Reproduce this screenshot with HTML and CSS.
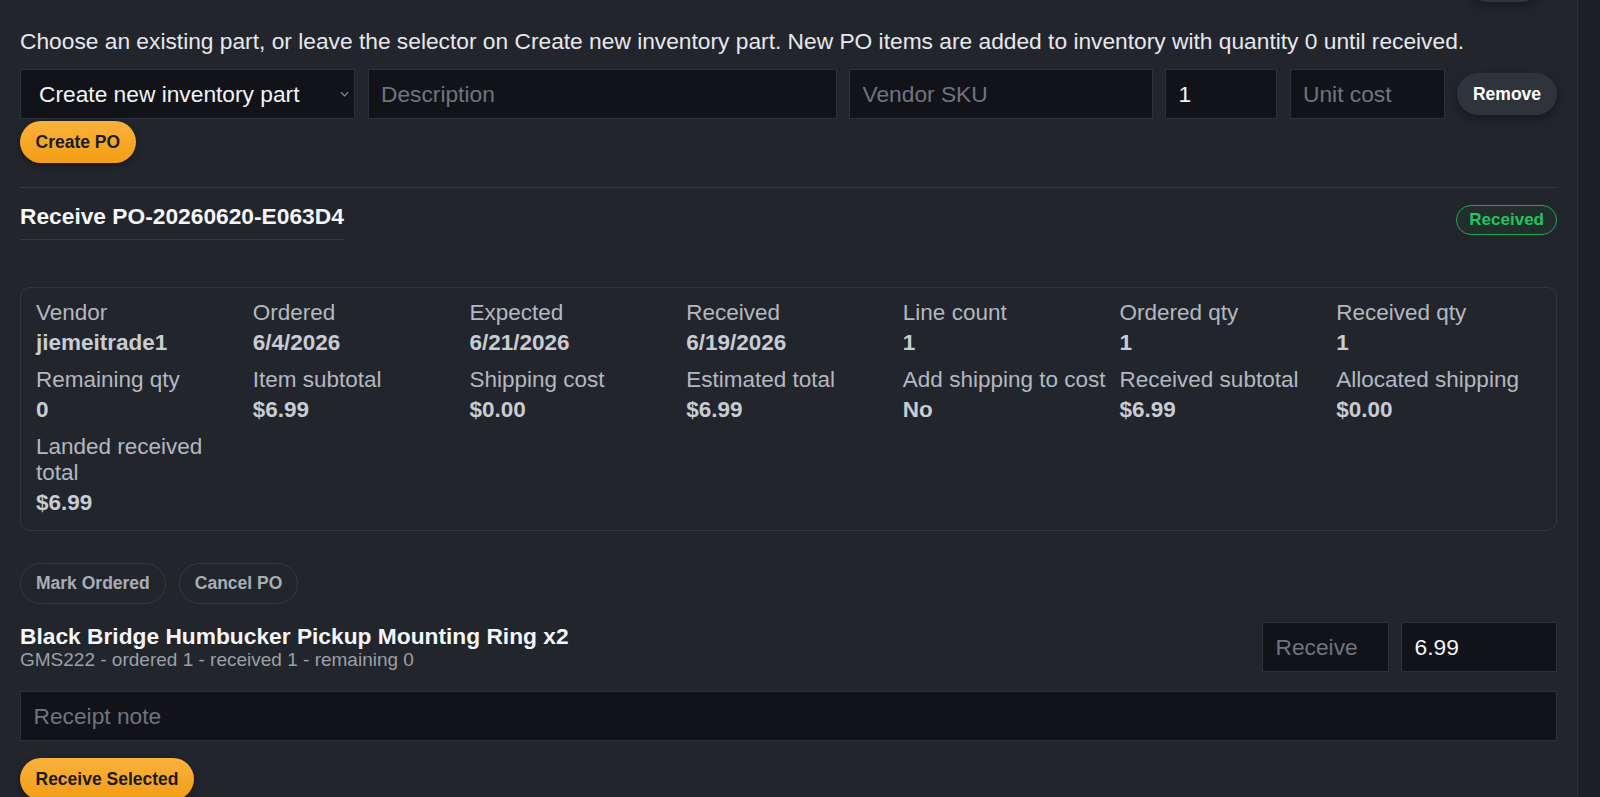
FILE: index.html
```html
<!DOCTYPE html>
<html lang="en">
<head>
  <meta charset="UTF-8">
  <meta name="viewport" content="width=device-width, initial-scale=1.0">
  <title>Purchase Orders</title>
  <link rel="stylesheet" href="styles.css">
</head>
<body>

  <div class="po-panel">
    <div class="panel-top">
      <button class="btn-dark stub" aria-label="Close"></button>
    </div>

    <p class="hint">Choose an existing part, or leave the selector on Create new inventory part. New PO items are added to inventory with quantity 0 until received.</p>

    <!-- New PO line -->
    <div class="line-row">
      <div class="select-wrap">
        <select class="field">
          <option>Create new inventory part</option>
        </select>
        <svg class="chevron" viewBox="0 0 10 6" fill="none" stroke="#8a8f98" stroke-width="1.3">
          <path d="M1 1l4 4 4-4"/>
        </svg>
      </div>
      <input class="field" type="text" placeholder="Description">
      <input class="field" type="text" placeholder="Vendor SKU">
      <input class="field" type="text" value="1">
      <input class="field" type="text" placeholder="Unit cost">
      <button class="btn-dark">Remove</button>
    </div>
    <button class="btn-orange">Create PO</button>

    <hr class="divider">

    <!-- Receive section -->
    <div class="po-head">
      <h3 class="po-title">Receive PO-20260620-E063D4</h3>
      <span class="badge">Received</span>
    </div>

    <div class="po-stats">
      <div><div class="stat-label">Vendor</div><div class="stat-value">jiemeitrade1</div></div>
      <div><div class="stat-label">Ordered</div><div class="stat-value">6/4/2026</div></div>
      <div><div class="stat-label">Expected</div><div class="stat-value">6/21/2026</div></div>
      <div><div class="stat-label">Received</div><div class="stat-value">6/19/2026</div></div>
      <div><div class="stat-label">Line count</div><div class="stat-value">1</div></div>
      <div><div class="stat-label">Ordered qty</div><div class="stat-value">1</div></div>
      <div><div class="stat-label">Received qty</div><div class="stat-value">1</div></div>
      <div><div class="stat-label">Remaining qty</div><div class="stat-value">0</div></div>
      <div><div class="stat-label">Item subtotal</div><div class="stat-value">$6.99</div></div>
      <div><div class="stat-label">Shipping cost</div><div class="stat-value">$0.00</div></div>
      <div><div class="stat-label">Estimated total</div><div class="stat-value">$6.99</div></div>
      <div><div class="stat-label">Add shipping to cost</div><div class="stat-value">No</div></div>
      <div><div class="stat-label">Received subtotal</div><div class="stat-value">$6.99</div></div>
      <div><div class="stat-label">Allocated shipping</div><div class="stat-value">$0.00</div></div>
      <div><div class="stat-label">Landed received total</div><div class="stat-value">$6.99</div></div>
    </div>

    <div class="po-actions">
      <button class="btn-outline">Mark Ordered</button>
      <button class="btn-outline">Cancel PO</button>
    </div>

    <div class="item-row">
      <div>
        <div class="item-name">Black Bridge Humbucker Pickup Mounting Ring x2</div>
        <div class="item-meta">GMS222 - ordered 1 - received 1 - remaining 0</div>
      </div>
      <div class="item-inputs">
        <input class="field qty-field" type="text" placeholder="Receive">
        <input class="field cost-field" type="text" value="6.99">
      </div>
    </div>

    <input class="field note-field" type="text" placeholder="Receipt note">

    <button class="btn-orange receive-btn">Receive Selected</button>
  </div>

</body>
</html>
```

FILE: styles.css
```css
* {
  box-sizing: border-box;
}

body {
  margin: 0;
  height: 797px;
  overflow: hidden;
  background-color: #1c1f25;
  font-family: "Liberation Sans", Arial, sans-serif;
  font-size: 22.75px;
  color: #e6e8ec;
}

.po-panel {
  width: calc(100% - 22px);
  min-height: 100vh;
  background-color: #22252c;
  border-right: 1px solid #2c3037;
  padding: 0 20px;
}

.panel-top {
  display: flex;
  justify-content: flex-end;
  margin-top: -40px;
  padding-right: 15px;
}

.panel-top .stub {
  width: 75px;
}

.hint {
  margin: 26px 0 0;
  line-height: 26px;
}

/* Form fields */
.field {
  display: block;
  width: 100%;
  height: 50px;
  padding: 0 12.5px;
  background-color: #111318;
  border: 1px solid #2c3038;
  border-radius: 0;
  color: #f3f4f6;
  font: inherit;
  outline: none;
}

.field::placeholder {
  color: #6f747d;
}

select.field {
  appearance: none;
  -webkit-appearance: none;
  padding-left: 18px;
}

.select-wrap {
  position: relative;
}

.chevron {
  position: absolute;
  right: 6px;
  top: 22px;
  width: 9px;
  height: 6px;
}

.line-row {
  display: grid;
  grid-template-columns: 335px 469px 1fr 112px 155px 100px;
  gap: 12.5px;
  align-items: center;
  margin-top: 15px;
}

/* Buttons */
.btn-dark,
.btn-orange,
.btn-outline {
  height: 42px;
  padding: 0 15px;
  border: none;
  border-radius: 999px;
  font-family: "Liberation Sans", Arial, sans-serif;
  font-size: 17.5px;
  font-weight: bold;
  cursor: pointer;
}

.btn-dark {
  background-color: #2f333b;
  color: #ffffff;
  box-shadow: 0 4px 10px rgba(0, 0, 0, 0.35);
}

.line-row .btn-dark {
  width: 100%;
}

.btn-orange {
  display: block;
  padding: 0 15.5px;
  background: linear-gradient(#f9b23c, #f39d14);
  color: #1b1b1b;
  box-shadow: 0 2px 6px rgba(0, 0, 0, 0.4);
  margin-top: 2px;
}

.btn-outline {
  height: 41px;
  background-color: transparent;
  border: 1px solid #353a42;
  color: #a9aeb6;
}

.divider {
  border: none;
  border-top: 1px solid #353941;
  margin: 24px 0 0;
}

/* PO header */
.po-head {
  display: flex;
  justify-content: space-between;
  align-items: center;
  margin-top: 15px;
}

.po-title {
  margin: 0;
  font-size: 22.75px;
  line-height: 26px;
  padding-bottom: 10px;
  border-bottom: 1px solid #363a42;
  color: #f5f6f8;
}

.badge {
  display: flex;
  align-items: center;
  height: 30px;
  padding: 0 12px;
  border: 1.5px solid #1fa850;
  border-radius: 999px;
  background-color: rgba(34, 197, 94, 0.05);
  color: #22c55e;
  font-size: 17px;
  font-weight: bold;
  margin-top: -3px;
}

/* Stats grid */
.po-stats {
  display: grid;
  grid-template-columns: repeat(7, 1fr);
  column-gap: 12px;
  row-gap: 11.5px;
  margin-top: 47px;
  padding: 12px 15px 15px;
  border: 1px solid #32363e;
  border-radius: 10px;
  font-size: 22.5px;
  line-height: 25.5px;
}

.stat-label {
  color: #b3b8c0;
}

.stat-value {
  margin-top: 4.5px;
  font-weight: bold;
  color: #c8ccd3;
}

.po-actions {
  display: flex;
  gap: 13px;
  margin-top: 32px;
}

/* Line item */
.item-row {
  display: flex;
  justify-content: space-between;
  align-items: center;
  margin-top: 18px;
}

.item-name {
  font-weight: bold;
  line-height: 26px;
  color: #f5f6f8;
}

.item-meta {
  font-size: 19px;
  line-height: 22px;
  color: #9aa0a8;
}

.item-inputs {
  display: flex;
  gap: 12px;
}

.qty-field {
  width: 127px;
}

.cost-field {
  width: 156px;
}

.note-field {
  margin-top: 19px;
}

.receive-btn {
  margin-top: 17px;
}
```
